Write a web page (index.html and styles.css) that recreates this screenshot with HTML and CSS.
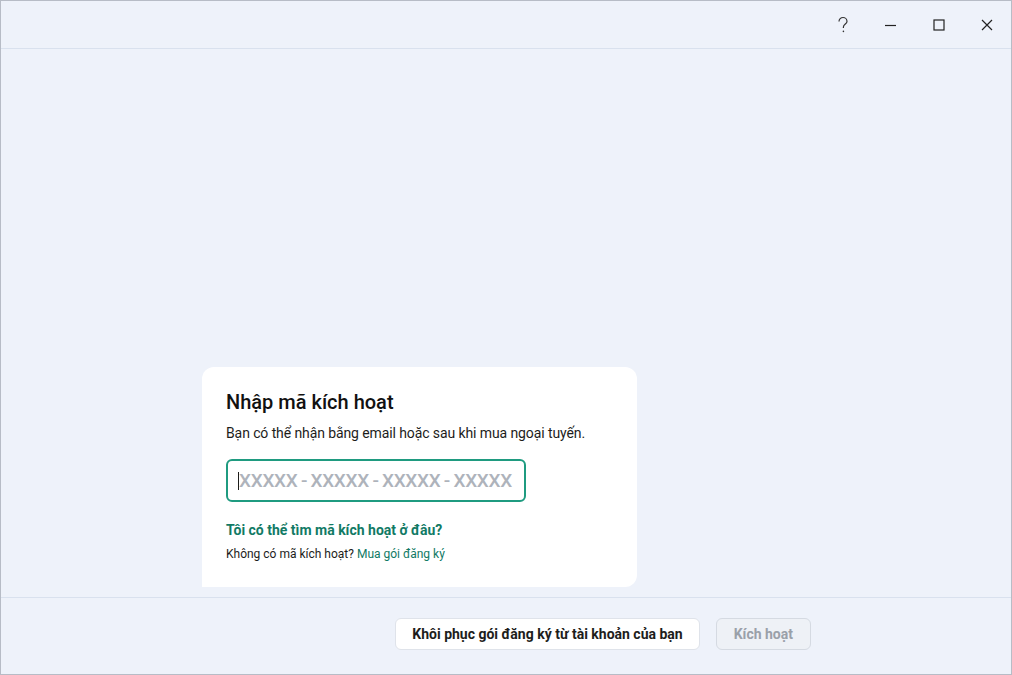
FILE: index.html
```html
<!DOCTYPE html>
<html>
  <head>
    <meta name="viewport" content="width=device-width, initial-scale=1" />
    <title>Nhập mã kích hoạt</title>
    <link rel="stylesheet" href="styles.css">
  </head>
  <body>
    <div class="window">
      <header class="titlebar">
        <button class="tb-btn" aria-label="Trợ giúp">
          <svg width="14" height="18" viewBox="0 0 14 18"><path d="M3 5.5a4 4 0 0 1 8 0c0 2.4-3.6 2.8-3.6 5.6v1" fill="none" stroke="#333" stroke-width="1.2"/><circle cx="7.4" cy="15.4" r="0.8" fill="#333"/></svg>
        </button>
        <button class="tb-btn" aria-label="Thu nhỏ">
          <svg width="12" height="12" viewBox="0 0 12 12"><path d="M0 6.5h11" stroke="#222" stroke-width="1.2"/></svg>
        </button>
        <button class="tb-btn" aria-label="Phóng to">
          <svg width="12" height="12" viewBox="0 0 12 12"><rect x="1" y="1" width="10" height="10" fill="none" stroke="#222" stroke-width="1.2"/></svg>
        </button>
        <button class="tb-btn" aria-label="Đóng">
          <svg width="12" height="12" viewBox="0 0 12 12"><path d="M1 1l10 10M11 1L1 11" stroke="#222" stroke-width="1.2"/></svg>
        </button>
      </header>

      <main class="content">
        <section class="card">
          <h1>Nhập mã kích hoạt</h1>
          <p class="lead">Bạn có thể nhận bằng email hoặc sau khi mua ngoại tuyến.</p>
          <label class="code-field">
            <span class="caret"></span>
            <input type="text" placeholder="XXXXX - XXXXX - XXXXX - XXXXX">
          </label>
          <a class="help-link" href="#">Tôi có thể tìm mã kích hoạt ở đâu?</a>
          <p class="note">Không có mã kích hoạt? <a href="#">Mua gói đăng ký</a></p>
        </section>
      </main>

      <footer class="footer">
        <button class="btn">Khôi phục gói đăng ký từ tài khoản của bạn</button>
        <button class="btn btn-disabled" disabled>Kích hoạt</button>
      </footer>
    </div>
  </body>
</html>
```

FILE: styles.css
```css
* {
  box-sizing: border-box;
}

body {
  margin: 0;
  font-family: Roboto, "Noto Sans", sans-serif;
  color: #1d1d1b;
}

.window {
  width: 1012px;
  height: 675px;
  display: flex;
  flex-direction: column;
  background: #eef2fa;
  border: 1px solid #b7bcc6;
}

/* Title bar */
.titlebar {
  height: 48px;
  flex: none;
  display: flex;
  justify-content: flex-end;
  align-items: center;
  border-bottom: 1px solid #d9e1ee;
}
.tb-btn {
  width: 48px;
  height: 46px;
  display: flex;
  align-items: center;
  justify-content: center;
  background: none;
  border: 0;
  padding: 0;
}

/* Content */
.content {
  flex: 1;
  display: flex;
  align-items: flex-end;
  padding: 0 0 10px 201px;
}

.card {
  width: 435px;
  height: 220px;
  background: #fff;
  border-radius: 12px 12px 12px 0;
  padding: 22px 24px 0;
}
.card h1 {
  margin: 0;
  font-size: 20px;
  font-weight: 500;
  line-height: 26px;
  color: #111;
}
.lead {
  margin: 8px 0 0;
  font-size: 14px;
  line-height: 20px;
  letter-spacing: -0.1px;
}

.code-field {
  margin-top: 16px;
  width: 300px;
  height: 43px;
  display: flex;
  align-items: center;
  border: 2px solid #1f9b80;
  border-radius: 6px;
  padding: 0 10px;
}
.caret {
  width: 1px;
  height: 18px;
  background: #1d1d1b;
  flex: none;
}
.code-field input {
  border: 0;
  outline: 0;
  padding: 0;
  width: 100%;
  font-family: inherit;
  font-size: 19px;
  font-weight: 500;
  color: #1d1d1b;
}
.code-field input::placeholder {
  color: #aeb3bb;
  letter-spacing: -0.3px;
  word-spacing: -1px;
}

.help-link {
  display: block;
  margin-top: 19px;
  font-size: 14px;
  font-weight: 700;
  line-height: 18px;
  color: #117a65;
  text-decoration: none;
}
.note {
  margin: 7px 0 0;
  font-size: 12px;
  line-height: 16px;
}
.note a {
  color: #117a65;
  text-decoration: none;
}

/* Footer */
.footer {
  height: 77px;
  flex: none;
  display: flex;
  justify-content: flex-end;
  align-items: center;
  gap: 16px;
  padding: 0 200px 4px 0;
  border-top: 1px solid #d9e1ee;
}
.btn {
  height: 32px;
  padding: 0 16px;
  font-family: inherit;
  font-size: 14px;
  font-weight: 700;
  color: #1d1d1b;
  background: #fff;
  border: 1px solid #dfe3ea;
  border-radius: 6px;
}
.btn-disabled {
  padding: 0 17px;
  color: #9aa0a9;
  background: #eef1f6;
  border-color: #d5dae2;
}
```
